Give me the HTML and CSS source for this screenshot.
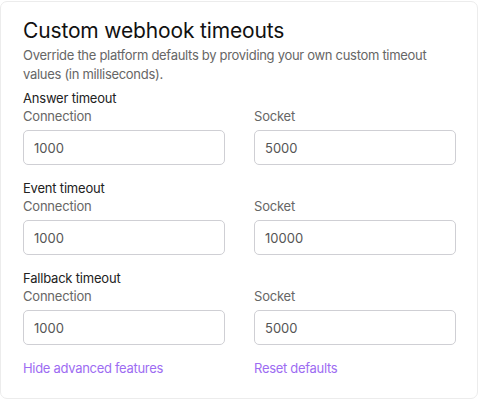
FILE: index.html
```html
<!DOCTYPE html>
<html>
<head>
<meta charset="utf-8">
<link rel="stylesheet" href="styles.css">
</head>
<body>
<div class="card">
  <h1 class="title">Custom webhook timeouts</h1>
  <p class="desc">Override the platform defaults by providing your own custom timeout values (in milliseconds).</p>

  <div class="group">
    <div class="group-title">Answer timeout</div>
    <div class="fields">
      <label class="field"><span class="label">Connection</span><input class="input" value="1000"></label>
      <label class="field"><span class="label">Socket</span><input class="input" value="5000"></label>
    </div>
  </div>

  <div class="group">
    <div class="group-title">Event timeout</div>
    <div class="fields">
      <label class="field"><span class="label">Connection</span><input class="input" value="1000"></label>
      <label class="field"><span class="label">Socket</span><input class="input" value="10000"></label>
    </div>
  </div>

  <div class="group">
    <div class="group-title">Fallback timeout</div>
    <div class="fields">
      <label class="field"><span class="label">Connection</span><input class="input" value="1000"></label>
      <label class="field"><span class="label">Socket</span><input class="input" value="5000"></label>
    </div>
  </div>

  <div class="links">
    <a class="link" href="#">Hide advanced features</a>
    <a class="link" href="#">Reset defaults</a>
  </div>
</div>
</body>
</html>
```
FILE: styles.css
```css
html, body {
  margin: 0;
  background: #ffffff;
}
body {
  padding: 1px 2px 2px 0;
  font-family: Inter, "Noto Sans", sans-serif;
}
.card {
  box-sizing: border-box;
  height: 398px;
  border: 1px solid #ececec;
  border-radius: 7px;
  padding: 15px 21px 0 22px;
  background: #fff;
}
.title {
  margin: 0;
  font-size: 21px;
  line-height: 28px;
  font-weight: 400;
  color: #111;
  letter-spacing: -0.15px;
}
.desc {
  margin: 1px 0 0;
  font-size: 13px;
  line-height: 19px;
  color: #666;
  letter-spacing: -0.3px;
}
.group {
  margin-top: 5px;
}
.group + .group {
  margin-top: 14px;
}
.group-title {
  font-size: 13px;
  line-height: 18px;
  color: #222;
  letter-spacing: -0.2px;
}
.fields {
  display: grid;
  grid-template-columns: 202px 202px;
  column-gap: 29px;
}
.field {
  display: flex;
  flex-direction: column;
  gap: 5px;
}
.label {
  font-size: 13px;
  line-height: 18px;
  color: #666;
  letter-spacing: -0.2px;
}
.input {
  box-sizing: border-box;
  height: 35px;
  width: 100%;
  margin: 0;
  border: 1px solid #cfcfd4;
  border-radius: 5px;
  padding: 0 10px;
  font-family: Inter, "Noto Sans", sans-serif;
  font-size: 13px;
  color: #555;
  background: #fff;
  outline: none;
}
.links {
  display: grid;
  grid-template-columns: 202px 202px;
  column-gap: 29px;
  margin-top: 14px;
}
.link {
  font-size: 13px;
  line-height: 18px;
  color: #9d6cf2;
  text-decoration: none;
  letter-spacing: -0.3px;
}
```
